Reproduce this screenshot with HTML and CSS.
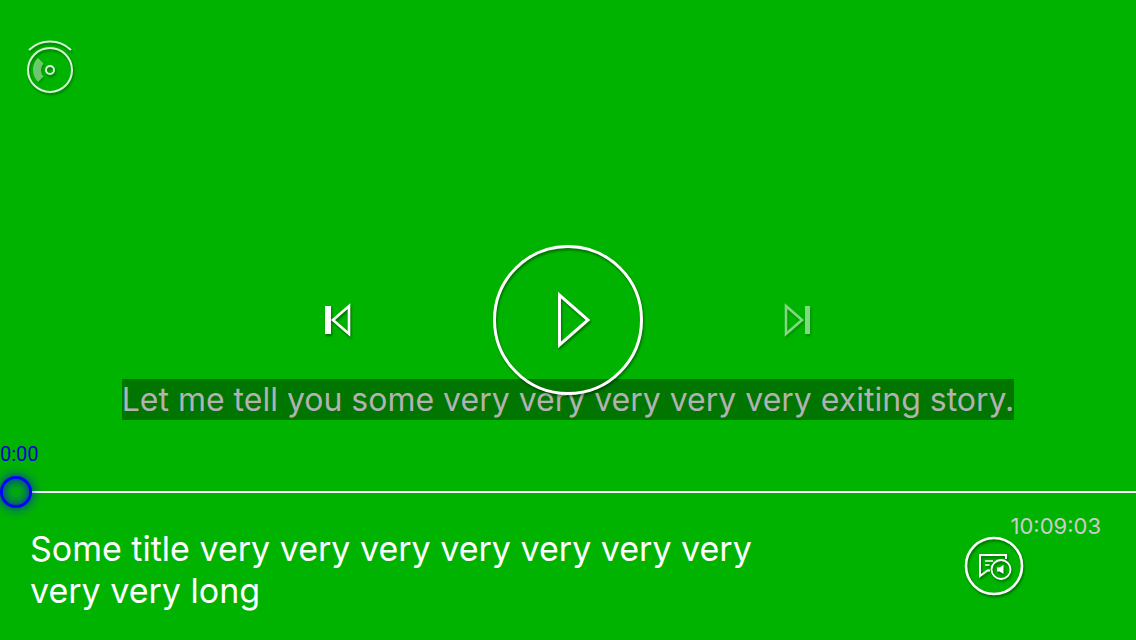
FILE: index.html
```html
<!DOCTYPE html>
<html lang="en">
<head>
<meta charset="utf-8">
<title>Video player</title>
<link rel="stylesheet" href="styles.css">
</head>
<body>
<main class="player">
  <header class="top">
    <button class="icon-button camera" type="button" aria-label="360 view">
      <svg width="50" height="58" viewBox="0 0 50 58" fill="none" stroke="currentColor" stroke-width="2">
        <path d="M4 12A30 30 0 0 1 46 12"/>
        <circle cx="25" cy="32" r="22"/>
        <circle cx="25" cy="32" r="4"/>
        <path class="sector" d="M13 20L18.500 25.500A9.500 9.500 0 0 0 18.500 38.500L13 44A17 17 0 0 1 13 20Z" stroke="none"/>
      </svg>
    </button>
  </header>

  <nav class="controls" aria-label="Playback">
    <button class="icon-button" type="button" aria-label="Previous">
      <svg width="30" height="36" viewBox="0 0 30 36">
        <path d="M2 4h6v28h-6z" fill="currentColor"/>
        <path d="M10 18L26 4V32Z" fill="none" stroke="currentColor" stroke-width="2.6"/>
      </svg>
    </button>
    <button class="icon-button play" type="button" aria-label="Play">
      <svg width="150" height="150" viewBox="0 0 150 150" fill="none" stroke="currentColor" stroke-width="3">
        <circle cx="75" cy="75" r="73.5"/>
        <path d="M66.5 50V100L95 75Z"/>
      </svg>
    </button>
    <button class="icon-button next" type="button" aria-label="Next" disabled>
      <svg width="30" height="36" viewBox="0 0 30 36">
        <path d="M22 4h5v28h-5z" fill="currentColor"/>
        <path d="M3 4L19 18L3 32Z" fill="none" stroke="currentColor" stroke-width="2.6"/>
      </svg>
    </button>
  </nav>

  <section class="bottom">
    <p class="caption">Let me tell you some very very very very very exiting story.</p>
    <div class="seek">
      <label class="elapsed" for="seek">0:00</label>
      <input class="slider" id="seek" type="range" min="0" max="36543" value="0">
    </div>
    <footer class="info">
      <h1 class="title">Some title very very very very very very very very very long</h1>
      <div class="side">
        <time class="duration">10:09:03</time>
        <button class="icon-button" type="button" aria-label="Audio and subtitles">
          <svg width="60" height="60" viewBox="0 0 60 60" fill="none" stroke="currentColor" stroke-width="2">
            <circle cx="30" cy="30" r="28" stroke-width="2.6"/>
            <path d="M42 23V19H16V40L23.500 34.500H26"/>
            <path d="M21 25H29M21 29H25.500" stroke-width="1.600"/>
            <circle cx="37" cy="33.500" r="9.500" stroke-width="1.800"/>
            <path d="M33 31.500H35.500L39.500 29V38L35.500 35.500H33Z" fill="currentColor" stroke="none"/>
          </svg>
        </button>
      </div>
    </footer>
  </section>
</main>
</body>
</html>
```
FILE: styles.css
```css
* {
  box-sizing: border-box;
}

body {
  margin: 0;
  background: #00b300;
  color: #fff;
  font-family: Inter, "Liberation Sans", sans-serif;
}

.player {
  display: grid;
  grid-template-rows: 1fr auto 1fr;
  min-height: 100vh;
}

.top {
  padding: 38px 25px;
}

.icon-button {
  display: block;
  padding: 0;
  border: 0;
  background: none;
  color: #fff;
  cursor: pointer;
}

.icon-button svg {
  display: block;
  filter: drop-shadow(1px 2px 1px rgba(0, 0, 0, 0.4));
}

.camera {
  opacity: 0.85;
}

.sector {
  fill: #fff;
  opacity: 0.5;
}

.controls {
  display: flex;
  justify-content: center;
  align-items: center;
  gap: 140px;
}

.play {
  position: relative;
  z-index: 1;
}

.next {
  opacity: 0.5;
  cursor: default;
}

.bottom {
  display: flex;
  flex-direction: column;
}

.caption {
  align-self: center;
  margin: -16px 0 0;
  background: #007500;
  color: #b2b2b2;
  font-size: 32px;
  line-height: 41px;
}

.seek {
  margin-top: 22px;
}

.elapsed {
  display: block;
  color: #0000d0;
  font-family: Roboto, "Liberation Sans", sans-serif;
  font-size: 20px;
  line-height: 24px;
}

.slider {
  display: block;
  width: 100%;
  height: 32px;
  margin: 10px 0 0;
  background: none;
  appearance: none;
}

.slider::-webkit-slider-runnable-track {
  height: 32px;
  background: linear-gradient(#fff, #fff) center / 100% 2px no-repeat;
}

.slider::-webkit-slider-thumb {
  width: 32px;
  height: 32px;
  border: 3px solid #00f;
  border-radius: 50%;
  background: #00b300;
  box-shadow: 0 0 12px rgba(0, 0, 255, 0.8), inset 0 0 12px rgba(0, 0, 255, 0.8);
  appearance: none;
}

.info {
  display: flex;
  justify-content: space-between;
  padding: 8px 35px 0 30px;
}

.title {
  max-width: 740px;
  margin: 12px 0 0;
  font-size: 34px;
  font-weight: 400;
  line-height: 42px;
}

.side {
  display: flex;
  flex-direction: column;
  width: 137px;
}

.duration {
  align-self: flex-end;
  color: #ccc;
  font-size: 22px;
  line-height: 20px;
}
```
